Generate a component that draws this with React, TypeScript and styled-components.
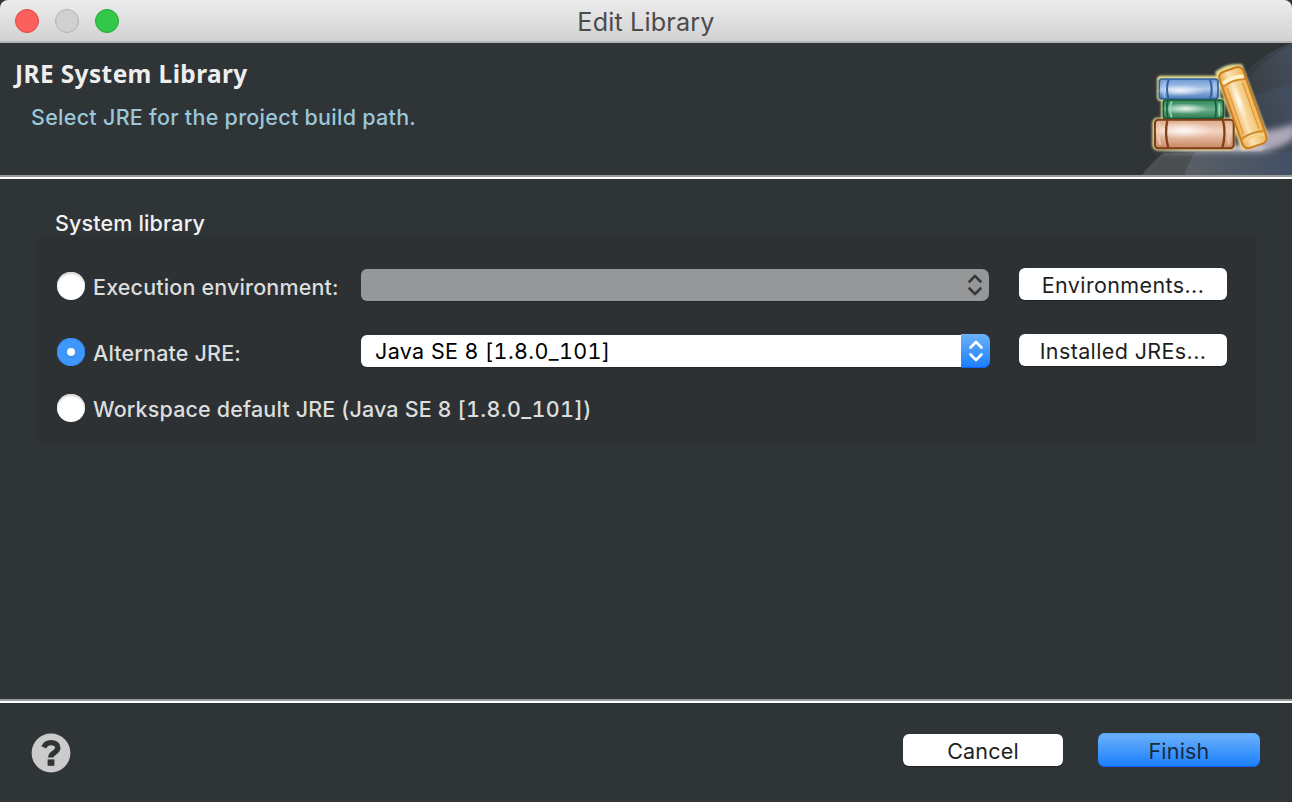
import React from "react";
import styled, { createGlobalStyle, css } from "styled-components";

const Global = createGlobalStyle`
  *, *::before, *::after { box-sizing: border-box; }
  html, body { margin: 0; background: #2f3437; }
  body {
    font-family: Inter, "Liberation Sans", sans-serif;
    font-size: 21.5px;
    letter-spacing: 0.36px;
    overflow: hidden;
  }
`;

const Window = styled.div`
  display: flex;
  flex-direction: column;
  width: 1292px;
  height: 802px;
  background: #2f3437;
  color: #dcdddd;
`;

const TitleBar = styled.header`
  display: grid;
  grid-template-columns: 1fr auto 1fr;
  align-items: center;
  height: 43px;
  padding: 1px 15px 0;
  background: linear-gradient(#ececec, #d2d2d2);
  border-bottom: 2px solid #b4b5b5;
  border-top-left-radius: 8px;
  border-top-right-radius: 8px;
`;

const Lights = styled.div`
  display: flex;
  gap: 16px;
`;

const Light = styled.span<{ $fill: string; $edge: string }>`
  width: 24px;
  height: 24px;
  border-radius: 50%;
  background: ${(p) => p.$fill};
  border: 1px solid ${(p) => p.$edge};
`;

const WindowTitle = styled.h1`
  margin: 0;
  font-size: 25.2px;
  line-height: 30px;
  font-weight: 400;
  letter-spacing: 0.16px;
  color: #4b4b4b;
  padding-top: 2px;
`;

const Banner = styled.section`
  display: flex;
  justify-content: space-between;
  height: 136px;
  border-bottom: 2px solid #fff;
  box-shadow: inset 0 -2px 0 #9a9b9b;
`;

const BannerText = styled.div`
  padding: 15px 0 0 15px;
`;

const BannerTitle = styled.h2`
  margin: 0;
  font-family: "Noto Sans", "Open Sans", sans-serif;
  font-size: 24.4px;
  line-height: 32px;
  font-weight: 700;
  letter-spacing: 0.42px;
  color: #eee;
`;

const BannerMessage = styled.p`
  margin: 12px 0 0 16px;
  line-height: 30px;
  font-weight: 450;
  letter-spacing: 0.28px;
  color: #9bc7d9;
`;

const Content = styled.main`
  flex: 1;
  padding: 30px 35px 0;
`;

const GroupLabel = styled.div`
  height: 28px;
  padding-left: 20px;
  line-height: 28px;
  font-weight: 450;
  letter-spacing: 0.14px;
  color: #f2f2f2;
`;

const Group = styled.div`
  display: grid;
  grid-template-columns: 304px 629px 208px;
  grid-template-rows: 66px 66px 46px;
  align-items: center;
  height: 206px;
  padding: 15px 0 0 22px;
  border-radius: 9px;
  background: #2d3134;
  border: 1px solid #2c3032;
  border-left-width: 0;
  border-right-width: 0;
`;

const RadioRow = styled.label<{ $wide?: boolean }>`
  display: flex;
  align-items: center;
  gap: 8px;
  white-space: nowrap;
  ${(p) => p.$wide && css`grid-column: 1 / -1;`}
`;

const RadioDot = styled.span<{ $checked?: boolean }>`
  display: flex;
  align-items: center;
  justify-content: center;
  width: 28px;
  height: 28px;
  border-radius: 50%;
  background: #fff;
  box-shadow: inset 0 2px 2px #d4d4d4;
  ${(p) =>
    p.$checked &&
    css`
      background: #3f97fb;
      box-shadow: inset 0 0 0 1px #348af0;
      &::after {
        content: "";
        width: 8px;
        height: 8px;
        border-radius: 50%;
        background: #fff;
        box-shadow: 0 1px 2px #2d7edb;
      }
    `}
`;

const Caption = styled.span`
  line-height: 28px;
  padding-top: 2px;
  font-weight: 450;
  letter-spacing: 0.16px;
`;

const Version = styled.span`
  font-variant-numeric: tabular-nums;
  letter-spacing: 0.36px;
`;

const Combo = styled.div`
  display: flex;
  align-items: center;
  justify-content: space-between;
  width: 629px;
  height: 34px;
  margin-bottom: 2px;
  color: #000;
`;

const ComboValue = styled.span<{ $disabled?: boolean }>`
  flex: 1;
  height: 32px;
  padding-left: 14px;
  line-height: 32px;
  border-radius: 6px 0 0 6px;
  background: ${(p) => (p.$disabled ? "#969798" : "#fff")};
  box-shadow: 0 1px 0 #25292b;
`;

const Stepper = styled.span<{ $disabled?: boolean }>`
  display: flex;
  align-items: center;
  justify-content: center;
  width: 29px;
  height: 34px;
  border-radius: 0 7px 7px 0;
  background: linear-gradient(#6cb2fa, #1a7efe);
  color: #fff;
  box-shadow: inset 0 -1px 0 #0d63f5;
  ${(p) =>
    p.$disabled &&
    css`
      width: 28px;
      height: 32px;
      margin-right: 1px;
      background: #969798;
      box-shadow: 0 1px 0 #25292b;
      color: #393a3b;
    `}
`;

const Button = styled.button<{ $primary?: boolean; $width: number }>`
  width: ${(p) => p.$width}px;
  height: 32px;
  padding: 2px 0 0;
  border: 0;
  border-radius: 6px;
  font: inherit;
  letter-spacing: inherit;
  line-height: 30px;
  color: #1d1e1f;
  background: #fff;
  box-shadow: 0 1px 1px #202325;
  ${(p) =>
    p.$primary &&
    css`
      height: 34px;
      border-radius: 7px;
      color: #182a40;
      background: linear-gradient(#6cb2fa, #1a7efe);
      box-shadow: inset 0 -1px 0 #0d63f5, inset 0 1px 0 #5aa5f5;
    `}
`;

const RowButton = styled(Button)`
  justify-self: start;
  margin: 0 0 4px 29px;
  letter-spacing: 0.38px;
`;

const Footer = styled.footer`
  display: flex;
  align-items: center;
  height: 103px;
  padding: 0 32px 0 31px;
  border-top: 2px solid #9a9b9b;
  box-shadow: inset 0 2px 0 #fff;
`;

const HelpButton = styled.span`
  display: flex;
  padding-top: 2px;
`;

const Actions = styled.div`
  display: flex;
  align-items: center;
  gap: 35px;
  margin-left: auto;
  padding-bottom: 3px;
  letter-spacing: 0.2px;
`;

const Chevrons = () => (
  <svg width="16" height="22" viewBox="0 0 16 22" fill="none" stroke="currentColor" strokeWidth="2.6" strokeLinecap="round" strokeLinejoin="round">
    <path d="M2.5 7.5 8 2l5.5 5.5M2.5 14.5 8 20l5.5-5.5" />
  </svg>
);

const HelpIcon = () => (
  <svg width="40" height="40" viewBox="0 0 40 40">
    <circle cx="20" cy="20" r="19.4" fill="#cbcbcb" />
    <path d="M12.8 14.3C14.4 10.8 17 9.6 20 9.6c4 0 6.8 2 6.8 5.2 0 5.2-7 4.6-7 9.7" fill="none" stroke="#2f3437" strokeWidth="5.4" />
    <rect x="16.6" y="26.4" width="6.8" height="6.4" fill="#2f3437" />
  </svg>
);

const BooksIcon = () => (
  <svg width="160" height="132" viewBox="0 9 480 396" preserveAspectRatio="none">
    <defs>
      <linearGradient id="floor" x1="0" y1="0" x2="1" y2="0">
        <stop offset="0" stopColor="#5b6065" />
        <stop offset="0.5" stopColor="#4d5765" />
        <stop offset="1" stopColor="#445065" />
      </linearGradient>
      <linearGradient id="outer" gradientUnits="userSpaceOnUse" x1="300" y1="150" x2="480" y2="20">
        <stop offset="0" stopColor="#31363a" />
        <stop offset="1" stopColor="#3f464f" />
      </linearGradient>
      <linearGradient id="middle" gradientUnits="userSpaceOnUse" x1="330" y1="150" x2="480" y2="70">
        <stop offset="0" stopColor="#373d42" />
        <stop offset="1" stopColor="#434c59" />
      </linearGradient>
      <linearGradient id="inner" gradientUnits="userSpaceOnUse" x1="360" y1="200" x2="480" y2="170">
        <stop offset="0" stopColor="#3c444e" />
        <stop offset="1" stopColor="#434e61" />
      </linearGradient>
      <linearGradient id="blue" x1="0" y1="0" x2="0" y2="1">
        <stop offset="0" stopColor="#6a98d3" />
        <stop offset="0.5" stopColor="#b3caea" />
        <stop offset="0.8" stopColor="#6c95cb" />
        <stop offset="1" stopColor="#5583bd" />
      </linearGradient>
      <linearGradient id="green" x1="0" y1="0" x2="0" y2="1">
        <stop offset="0" stopColor="#2f8556" />
        <stop offset="0.5" stopColor="#6ab38d" />
        <stop offset="1" stopColor="#2a774d" />
      </linearGradient>
      <linearGradient id="brown" x1="0" y1="0" x2="0" y2="1">
        <stop offset="0" stopColor="#dba888" />
        <stop offset="0.4" stopColor="#f3d3c0" />
        <stop offset="1" stopColor="#c98660" />
      </linearGradient>
      <linearGradient id="gold" x1="0" y1="0" x2="1" y2="0">
        <stop offset="0" stopColor="#eba64c" />
        <stop offset="0.4" stopColor="#fae3b4" />
        <stop offset="1" stopColor="#edb655" />
      </linearGradient>
      <radialGradient id="shine">
        <stop offset="0" stopColor="#fff" stopOpacity="0.85" />
        <stop offset="1" stopColor="#fff" stopOpacity="0" />
      </radialGradient>
      <filter id="soft" x="-20%" y="-50%" width="140%" height="200%">
        <feGaussianBlur stdDeviation="9" />
      </filter>
      <filter id="glow" x="-10%" y="-10%" width="120%" height="120%">
        <feGaussianBlur stdDeviation="2.5" />
      </filter>
    </defs>
    <path d="M300 140Q380 40 480 9V405H300Z" fill="url(#outer)" />
    <path d="M325 150Q385 60 480 14V405H325Z" fill="url(#middle)" />
    <path d="M355 172Q420 144 480 137V405H355Z" fill="url(#inner)" />
    <path d="M30 405Q60 365 95 338H480V405Z" fill="#4c4f51" />
    <path d="M158 405Q168 370 190 335H480V405Z" fill="url(#floor)" />
    <path d="M380 275Q440 270 490 250V292Q440 332 385 336H60L200 322H300Z" fill="#bfb9cb" opacity="0.85" filter="url(#soft)" />
    <path d="M60 334H385L410 318H300Z" fill="#d2cad8" opacity="0.7" filter="url(#glow)" />
    <g fill="#e6de92" stroke="#e6de92" strokeWidth="10" strokeLinejoin="round" filter="url(#glow)">
      <rect x="80" y="112" width="180" height="66" rx="6" />
      <rect x="92" y="178" width="180" height="58" rx="8" />
      <rect x="66" y="238" width="238" height="88" rx="10" />
      <path d="M255 98Q290 72 327 78L403 286Q380 322 332 326Z" />
    </g>
    <rect x="82" y="117" width="176" height="60" rx="8" fill="url(#blue)" stroke="#2d5f9f" strokeWidth="5" />
    <ellipse cx="145" cy="152" rx="75" ry="17" fill="url(#shine)" />
    <path d="M110 119Q100 148 110 177M234 119Q244 148 234 177" fill="none" stroke="#2f609f" strokeWidth="6" />
    <path d="M99 124Q90 148 99 172M248 126V170" fill="none" stroke="#a4c3ec" strokeWidth="4" />
    <rect x="94" y="180" width="180" height="56" rx="8" fill="url(#green)" stroke="#125a33" strokeWidth="5" />
    <ellipse cx="160" cy="206" rx="70" ry="16" fill="url(#shine)" />
    <path d="M108 182Q101 208 108 234M249 182Q256 208 249 234" fill="none" stroke="#12603a" strokeWidth="5" />
    <path d="M119 184Q110 208 119 232M262 190V228" fill="none" stroke="#9bd8b8" strokeWidth="5" />
    <rect x="69" y="239" width="236" height="86" rx="10" fill="url(#brown)" stroke="#7e3d17" strokeWidth="6" />
    <ellipse cx="155" cy="270" rx="90" ry="26" fill="url(#shine)" />
    <path d="M106 241Q97 282 109 323M273 241Q283 282 271 323" fill="none" stroke="#823f18" strokeWidth="7" />
    <path d="M83 250Q75 282 85 314M290 250V314" fill="none" stroke="#f3c9ac" strokeWidth="5" />
    <g transform="translate(289 88) rotate(-19.5)">
      <rect x="-35" y="2" width="76" height="242" rx="17" fill="url(#gold)" stroke="#cd7c1b" strokeWidth="6" />
      <path d="M-32 44Q2 32 38 44M-32 210Q2 200 38 210" fill="none" stroke="#d18a2c" strokeWidth="6" />
      <path d="M-30 35Q2 23 36 35" fill="none" stroke="#fff0c8" strokeWidth="11" />
      <path d="M-28 220Q2 210 36 220" fill="none" stroke="#f6cf86" strokeWidth="7" />
      <path d="M-22 52V198M27 52V198" stroke="#e39a3b" strokeWidth="4" />
      <ellipse cx="-2" cy="100" rx="13" ry="62" fill="url(#shine)" />
    </g>
  </svg>
);

export default function App() {
  return (
    <>
      <Global />
      <Window>
        <TitleBar>
          <Lights>
            <Light $fill="#fc605c" $edge="#e2463f" />
            <Light $fill="#d0d0d0" $edge="#b2b2b2" />
            <Light $fill="#34c84a" $edge="#22a935" />
          </Lights>
          <WindowTitle>Edit Library</WindowTitle>
        </TitleBar>
        <Banner>
          <BannerText>
            <BannerTitle>JRE System Library</BannerTitle>
            <BannerMessage>Select JRE for the project build path.</BannerMessage>
          </BannerText>
          <BooksIcon />
        </Banner>
        <Content>
          <GroupLabel>System library</GroupLabel>
          <Group>
            <RadioRow>
              <RadioDot />
              <Caption>Execution environment:</Caption>
            </RadioRow>
            <Combo>
              <ComboValue $disabled />
              <Stepper $disabled><Chevrons /></Stepper>
            </Combo>
            <RowButton $width={208}>Environments...</RowButton>
            <RadioRow>
              <RadioDot $checked />
              <Caption>Alternate JRE:</Caption>
            </RadioRow>
            <Combo>
              <ComboValue>Java SE 8 <Version>[1.8.0_101]</Version></ComboValue>
              <Stepper><Chevrons /></Stepper>
            </Combo>
            <RowButton $width={208}>Installed JREs...</RowButton>
            <RadioRow $wide>
              <RadioDot />
              <Caption>Workspace default JRE (Java SE 8 <Version>[1.8.0_101]</Version>)</Caption>
            </RadioRow>
          </Group>
        </Content>
        <Footer>
          <HelpButton><HelpIcon /></HelpButton>
          <Actions>
            <Button $width={160}>Cancel</Button>
            <Button $primary $width={162}>Finish</Button>
          </Actions>
        </Footer>
      </Window>
    </>
  );
}
